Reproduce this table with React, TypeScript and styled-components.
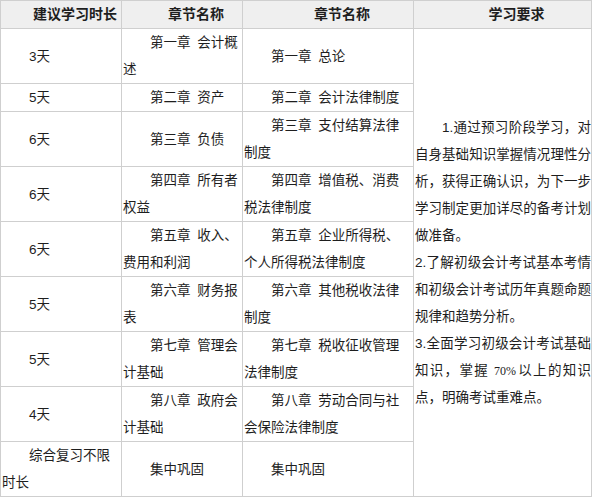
import React from "react";
import styled, { createGlobalStyle } from "styled-components";

interface PlanRow {
    days: string
    basic: string
    law: string
}

const plan: PlanRow[] = [
    { days: "3天", basic: "第一章 会计概述", law: "第一章 总论" },
    { days: "5天", basic: "第二章 资产", law: "第二章 会计法律制度" },
    { days: "6天", basic: "第三章 负债", law: "第三章 支付结算法律制度" },
    { days: "6天", basic: "第四章 所有者权益", law: "第四章 增值税、消费税法律制度" },
    { days: "6天", basic: "第五章 收入、费用和利润", law: "第五章 企业所得税、个人所得税法律制度" },
    { days: "5天", basic: "第六章 财务报表", law: "第六章 其他税收法律制度" },
    { days: "5天", basic: "第七章 管理会计基础", law: "第七章 税收征收管理法律制度" },
    { days: "4天", basic: "第八章 政府会计基础", law: "第八章 劳动合同与社会保险法律制度" },
    { days: "综合复习不限时长", basic: "集中巩固", law: "集中巩固" },
];

const StudyPlan: React.FC = () => {
    return (
        <Table>
            <colgroup>
                <col style={{ width: 121 }} />
                <col style={{ width: 121 }} />
                <col style={{ width: 171 }} />
                <col style={{ width: 178 }} />
            </colgroup>
            <thead>
                <tr>
                    <HeadCell>建议学习时长</HeadCell>
                    <HeadCell>章节名称</HeadCell>
                    <HeadCell>章节名称</HeadCell>
                    <HeadCell>学习要求</HeadCell>
                </tr>
            </thead>
            <tbody>
                {plan.map((row, i) => (
                    <tr key={i}>
                        <Cell>{row.days}</Cell>
                        <Cell>{row.basic}</Cell>
                        <Cell $wide>{row.law}</Cell>
                        {i === 0 && (
                            <RequireCell rowSpan={plan.length}>
                                <Para $indent>1.通过预习阶段学习，对自身基础知识掌握情况理性分析，获得正确认识，为下一步学习制定更加详尽的备考计划做准备。</Para>
                                <Para>2.了解初级会计考试基本考情和初级会计考试历年真题命题规律和趋势分析。</Para>
                                <Para>3.全面学习初级会计考试基础知识，掌握<Num>70%</Num>以上的知识点，明确考试重难点。</Para>
                            </RequireCell>
                        )}
                    </tr>
                ))}
            </tbody>
        </Table>
    );
}

const GlobalStyle = createGlobalStyle`
    body {
        margin: 0;
        background: #fff;
        font-family: "Liberation Sans", "Noto Sans CJK SC", sans-serif;
        color: #1e1e1e;
    }
`;

const Table = styled.table`
    width: 591px;
    table-layout: fixed;
    border-collapse: collapse;
    font-size: 13.5px;
    line-height: 27px;
`;

const HeadCell = styled.th`
    height: 27px;
    padding: 0;
    border: 1px solid #cfcfcf;
    background: #efefef;
    font-size: 14px;
    font-weight: 700;
    text-align: center;
    text-indent: 2em;
    vertical-align: middle;
`;

const Cell = styled.td<{ $wide?: boolean }>`
    padding: 0 ${props => props.$wide ? "6px" : "2px"} 0 1px;
    border: 1px solid #cfcfcf;
    text-indent: 2em;
    word-spacing: 3px;
    vertical-align: middle;
    text-align: left;
`;

const RequireCell = styled.td`
    padding: 0 0 0 1px;
    border: 1px solid #cfcfcf;
    vertical-align: middle;
    text-align: justify;
`;

const Para = styled.p<{ $indent?: boolean }>`
    margin: 0;
    text-indent: ${props => props.$indent ? "2em" : "0"};
`;

const Num = styled.span`
    display: inline-block;
    margin: 0 1px 0 5px;
    font-family: "Liberation Serif", serif;
    font-size: 12px;
    line-height: 1;
    text-indent: 0;
`;

const App: React.FC = () => (
    <>
        <GlobalStyle />
        <StudyPlan />
    </>
);

export default App;
